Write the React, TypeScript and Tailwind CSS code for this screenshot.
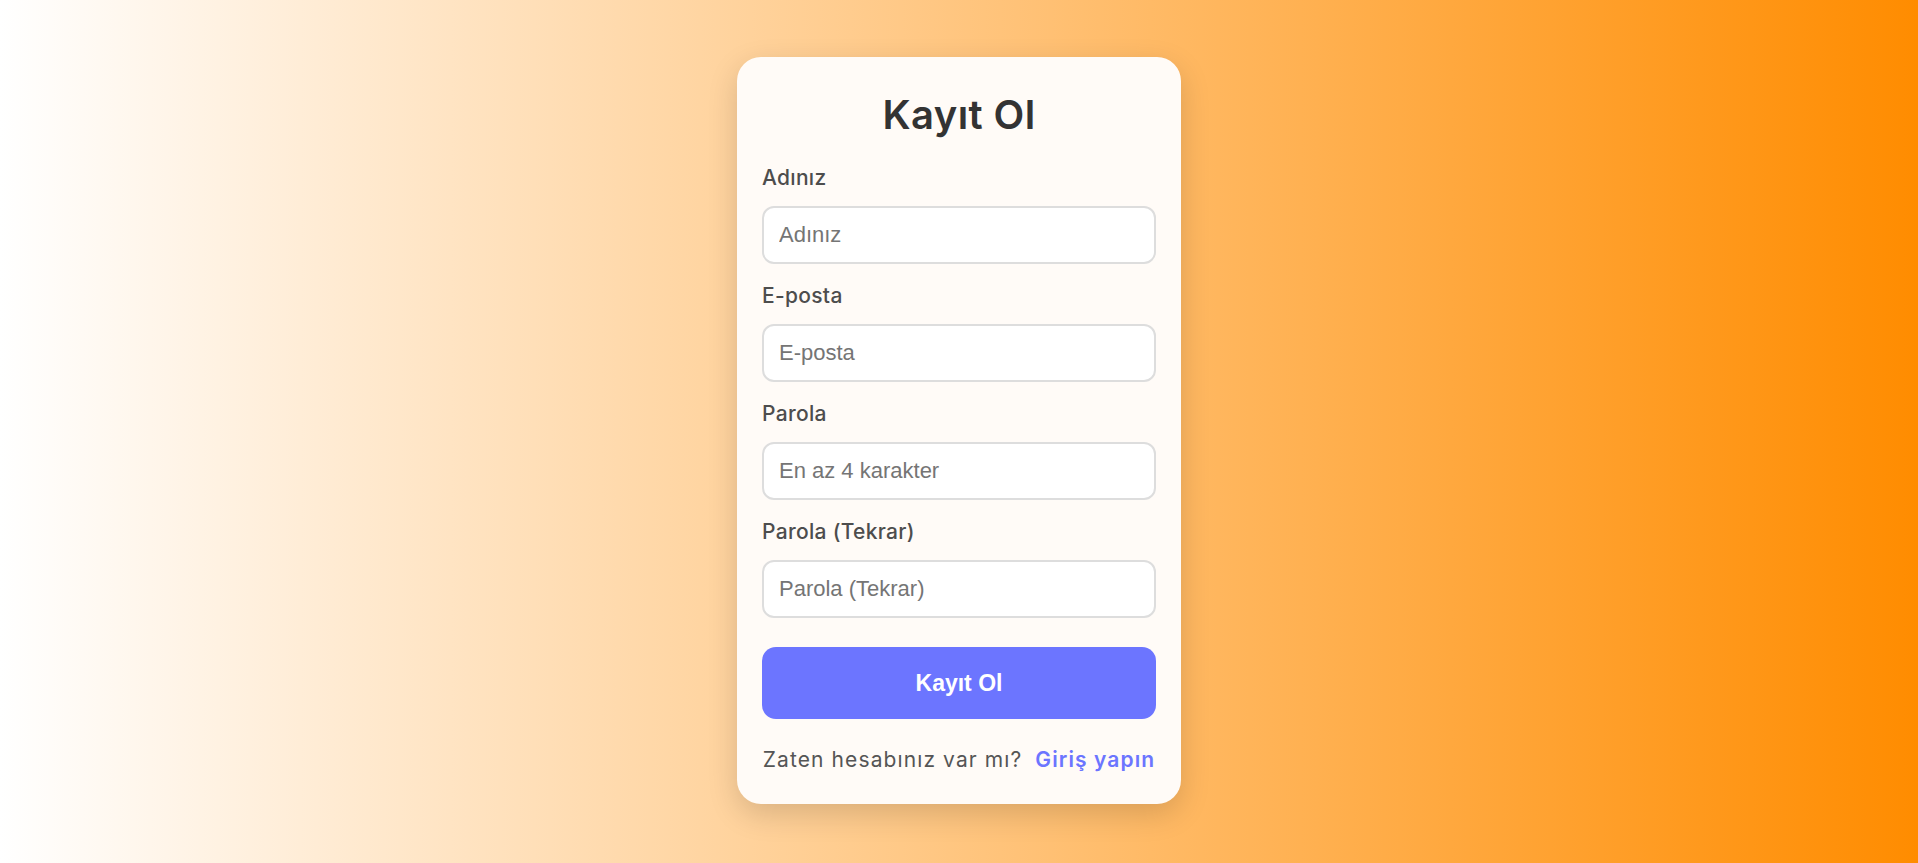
import { useState } from "react";

const fields = [
    { label: "Adınız", placeholder: "Adınız", type: "text" },
    { label: "E-posta", placeholder: "E-posta", type: "email" },
    { label: "Parola", placeholder: "En az 4 karakter", type: "password" },
    { label: "Parola (Tekrar)", placeholder: "Parola (Tekrar)", type: "password" },
];

export default function App() {
    const [values, setValues] = useState<Record<string, string>>({});

    return (
        <div className="min-h-screen w-full flex items-center justify-center bg-[linear-gradient(to_right,#ffffff,#ff8c00)] font-['Inter',sans-serif]">
            <div className="w-[444px] bg-[#fffbf7] rounded-[24px] shadow-[0_10px_30px_rgba(0,0,0,0.15)] px-[25px] pt-[34px] pb-[29px] mb-[2px]">
                <h1 className="text-center text-[40px] leading-[48px] font-semibold text-[#333] tracking-[0.4px]">
                    Kayıt Ol
                </h1>

                <form className="mt-[24px]" onSubmit={(e) => e.preventDefault()}>
                    {fields.map((f, i) => (
                        <div key={f.label} className={i > 0 ? "mt-[17px]" : ""}>
                            <label className="block text-[21px] leading-[30px] font-medium text-[#4d4d4d] tracking-[0.3px] mb-[13px]">
                                {f.label}
                            </label>
                            <input
                                type={f.type}
                                placeholder={f.placeholder}
                                value={values[f.label] || ""}
                                onChange={(e) => setValues({ ...values, [f.label]: e.target.value })}
                                className="block w-full h-[58px] px-[15px] bg-white border-2 border-[#dddddd] rounded-[12px] text-[22px] font-['Liberation_Sans',Arial,sans-serif] text-[#333] placeholder:text-[#757575] outline-none"
                            />
                        </div>
                    ))}

                    <button
                        type="submit"
                        className="mt-[29px] w-full h-[72px] rounded-[14px] bg-[#6c75ff] text-white text-[23px] font-bold font-['Liberation_Sans',Arial,sans-serif]"
                    >
                        Kayıt Ol
                    </button>
                </form>

                <p className="mt-[26px] flex justify-center gap-[13px] text-[21px] leading-[30px] text-[#555] tracking-[1.1px]">
                    <span>Zaten hesabınız var mı?</span>
                    <a href="#" className="text-[#6c75ff] font-semibold">Giriş yapın</a>
                </p>
            </div>
        </div>
    );
}
